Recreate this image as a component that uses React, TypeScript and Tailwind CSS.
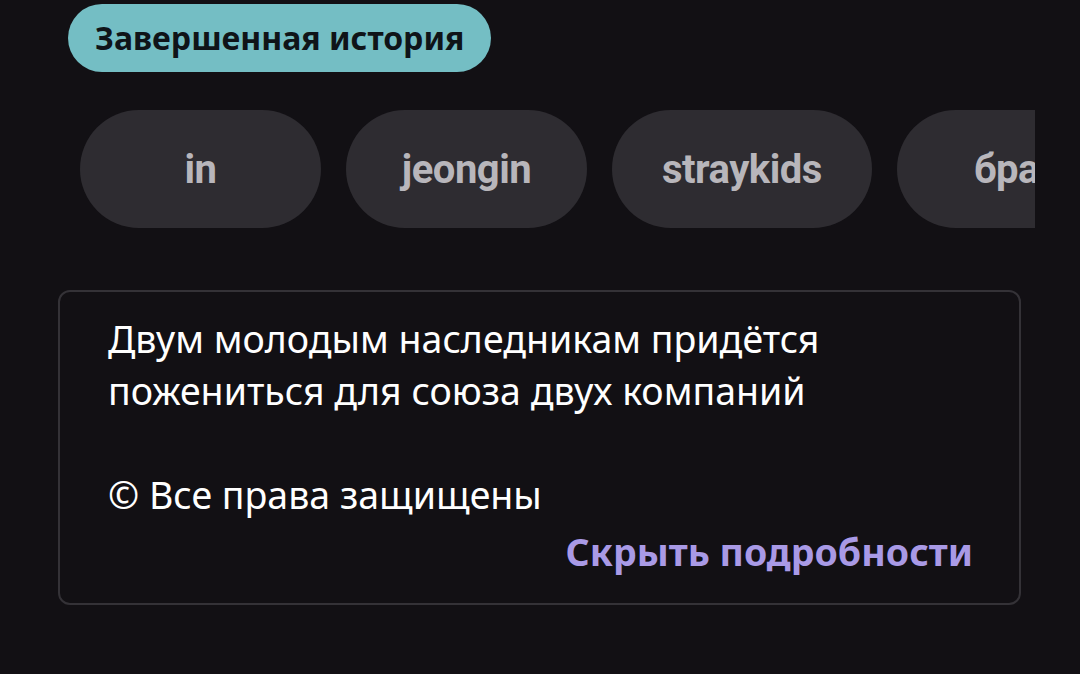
const tags = ['in', 'jeongin', 'straykids', 'брак'];

export default function App() {
  return (
    <div
      className="min-h-[674px] w-[1080px] overflow-hidden bg-[#121014] pt-[4px]"
      style={{ fontFamily: '"Noto Sans", "Open Sans", sans-serif' }}
    >
      <div className="pl-[68px]">
        <span className="inline-flex h-[68px] items-center rounded-full bg-[#74bec4] px-[27px] text-[32px] font-bold text-[#0f1418]">
          Завершенная история
        </span>
      </div>

      <div className="ml-[80px] mt-[38px] flex w-[955px] gap-[25px] overflow-hidden">
        {tags.map(tag => (
          <div
            key={tag}
            className="flex h-[118px] min-w-[241px] shrink-0 items-center justify-center rounded-full bg-[#2e2c31] px-[50px] pt-[2px] text-[40px] font-bold tracking-[-0.5px] text-[#b8b6bb]"
            style={{ fontFamily: 'Roboto, sans-serif' }}
          >
            {tag}
          </div>
        ))}
      </div>

      <div className="ml-[58px] mt-[62px] w-[963px] rounded-[12px] border-2 border-[#343237] pb-[25px] pl-[48px] pr-[46px] pt-[21px]">
        <p className="whitespace-pre-line text-[37.5px] leading-[52px] text-white">
          {'Двум молодым наследникам придётся\nпожениться для союза двух компаний\n\n© Все права защищены'}
        </p>
        <div className="mt-[5px] text-right text-[37.5px] font-bold leading-[52px] text-[#a99ae6]">
          Скрыть подробности
        </div>
      </div>
    </div>
  );
}
